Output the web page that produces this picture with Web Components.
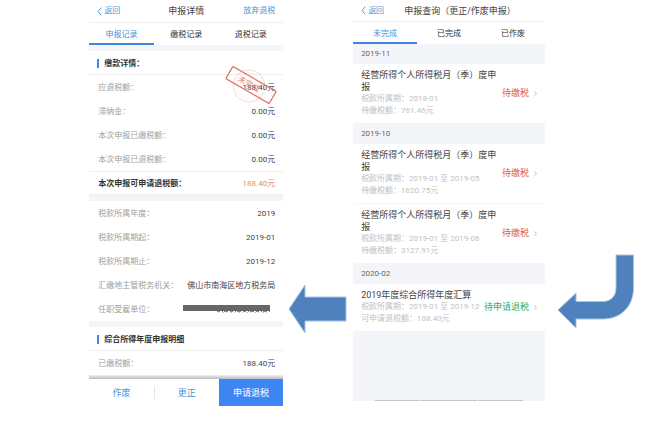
<!DOCTYPE html>
<html lang="zh-CN">
<head>
<meta charset="utf-8">
<title>申报详情</title>
<style>
    body{
        margin: 0;
        background: #fff;
        color: #444;
        font: 8px/12px Roboto, "Noto Sans CJK SC", sans-serif;
    }
</style>
</head>
<body>
<flow-board>
    <phone-screen>
        <nav-bar>申报详情<button-link slot="action">放弃退税</button-link></nav-bar>
        <tab-bar tabs="申报记录,缴税记录,退税记录"></tab-bar>
        <screen-gap></screen-gap>
        <section-title>缴款详情：</section-title>
        <info-row label="应退税额：">188.40元<status-stamp slot="stamp">未完成</status-stamp></info-row>
        <info-row label="滞纳金：">0.00元</info-row>
        <info-row label="本次申报已缴税额：">0.00元</info-row>
        <info-row label="本次申报已退税额：">0.00元</info-row>
        <info-row total label="本次申报可申请退税额：">188.40元</info-row>
        <screen-gap></screen-gap>
        <info-row label="税款所属年度：">2019</info-row>
        <info-row label="税款所属期起：">2019-01</info-row>
        <info-row label="税款所属期止：">2019-12</info-row>
        <info-row label="汇缴地主管税务机关：">佛山市南海区地方税务局</info-row>
        <info-row label="任职受雇单位："><redacted-bar></redacted-bar></info-row>
        <screen-gap></screen-gap>
        <section-title>综合所得年度申报明细</section-title>
        <info-row label="已缴税额：">188.40元</info-row>
        <action-bar></action-bar>
    </phone-screen>
    <flow-arrow kind="straight"></flow-arrow>
    <phone-screen>
        <nav-bar start>申报查询（更正/作废申报）</nav-bar>
        <tab-bar tabs="未完成,已完成,已作废"></tab-bar>
        <month-head>2019-11</month-head>
        <record-item period="2018-01" amount-label="待缴税额" amount="761.46元" status="待缴税">经营所得个人所得税月（季）度申报</record-item>
        <month-head>2019-10</month-head>
        <record-item period="2019-01 至 2019-05" amount-label="待缴税额" amount="1620.75元" status="待缴税">经营所得个人所得税月（季）度申报</record-item>
        <record-item period="2019-01 至 2019-06" amount-label="待缴税额" amount="3127.91元" status="待缴税">经营所得个人所得税月（季）度申报</record-item>
        <month-head>2020-02</month-head>
        <record-item refund period="2019-01 至 2019-12" amount-label="可申请退税额" amount="188.40元" status="待申请退税">2019年度综合所得年度汇算</record-item>
        <list-end></list-end>
    </phone-screen>
    <flow-arrow kind="bent"></flow-arrow>
</flow-board>

<script>
function define(name, render){
    customElements.define(name, class extends HTMLElement {
        constructor(){
            super();
            this.attachShadow({mode: 'open'});
        }
        connectedCallback(){
            this.shadowRoot.innerHTML = render(this);
        }
    });
}

const reset = `
    *{ box-sizing: border-box; }
    button{
        font: inherit;
        color: inherit;
        background: none;
        border: 0;
        padding: 0;
        margin: 0;
        white-space: nowrap;
    }
`;

define('flow-board', () => `
    <style>
        :host{
            display: grid;
            grid-template-columns: 194fr 70fr 192fr 116fr;
            align-items: start;
            padding-left: 13.5%;
        }
    </style>
    <slot></slot>
`);

define('phone-screen', () => `
    <style>
        :host{
            display: flex;
            flex-direction: column;
            min-width: 0;
        }
    </style>
    <slot></slot>
`);

define('nav-bar', () => `
    <style>
        ${reset}
        :host{
            display: grid;
            grid-template-columns: 1fr auto 1fr;
            align-items: center;
            height: 23px;
            padding: 0 8px;
            border-bottom: 1px solid #eee;
            box-sizing: border-box;
        }
        :host([start]){
            grid-template-columns: auto 1fr;
            column-gap: 20px;
            height: 22px;
        }
        .back{
            display: flex;
            align-items: center;
            gap: 2px;
            color: #5596d2;
        }
        h1{
            margin: 0;
            font-size: 9px;
            font-weight: 400;
            white-space: nowrap;
        }
        ::slotted([slot=action]){ justify-self: end; }
    </style>
    <button class="back">
        <svg width="5" height="9" viewBox="0 0 5 9" fill="none" stroke="currentColor"><path d="M4.3.6 1 4.5l3.3 3.9"/></svg>
        返回
    </button>
    <h1><slot></slot></h1>
    <slot name="action"></slot>
`);

define('button-link', () => `
    <style>
        ${reset}
        :host{ display: flex; color: #5596d2; }
    </style>
    <button><slot></slot></button>
`);

define('tab-bar', el => `
    <style>
        ${reset}
        :host{
            display: flex;
            height: 22px;
            color: #333;
        }
        button{
            flex: 1;
            padding-top: 3px;
            border-bottom: 2px solid transparent;
        }
        .active{
            color: #4a90d9;
            border-color: #3f86e0;
        }
    </style>
    ${el.getAttribute('tabs').split(',').map((t, i) => `<button class="${i ? '' : 'active'}">${t}</button>`).join('')}
`);

define('screen-gap', () => `<style>:host{ display: block; height: 6px; background: #f4f5f9; }</style>`);

define('section-title', () => `
    <style>
        :host{
            display: flex;
            align-items: center;
            gap: 5px;
            height: 24px;
            padding: 2px 8px 0;
            border-bottom: 1px solid #eee;
            box-sizing: border-box;
            color: #333;
        }
        i{
            width: 2px;
            height: 9px;
            background: #3f86e8;
        }
        h2{
            margin: 0;
            font-size: 8px;
            font-weight: 700;
        }
    </style>
    <i></i><h2><slot></slot></h2>
`);

define('info-row', el => `
    <style>
        :host{
            display: flex;
            justify-content: space-between;
            align-items: center;
            height: 24px;
            padding: 2px 8px 0 9px;
            box-sizing: border-box;
            position: relative;
            white-space: nowrap;
        }
        .label{ color: #a0a0a0; }
        :host([total]){
            border: solid #eee;
            border-width: 1px 0;
        }
        :host([total]) .label{
            color: #333;
            font-weight: 700;
        }
        :host([total]) .value{ color: #e0954a; }
        ::slotted([slot=stamp]){
            position: absolute;
            right: 4px;
            top: -12px;
        }
    </style>
    <span class="label">${el.getAttribute('label')}</span>
    <span class="value"><slot></slot></span>
    <slot name="stamp"></slot>
`);

define('status-stamp', el => `
    <style>:host{ display: block; width: 56px; height: 44px; }</style>
    <svg width="56" height="44" viewBox="0 0 56 44" fill="none" stroke="#e27b70">
        <circle cx="26" cy="23" r="16" stroke-width=".6" opacity=".5"/>
        <circle cx="26" cy="23" r="13" stroke-width=".5" stroke-dasharray="2 1" opacity=".3"/>
        <g transform="rotate(30 28 22)">
            <rect x="3" y="15" width="50" height="14" rx="1" stroke-width="1.3"/>
            <text x="26" y="25" font-size="8" text-anchor="middle" fill="#e27b70" stroke="none">${el.textContent}</text>
        </g>
    </svg>
`);

define('redacted-bar', () => `
    <style>
        :host{ display: flex; padding-right: 4px; }
    </style>
    <svg width="88" height="12" viewBox="0 0 88 12">
        <path fill="#666" d="M0 1h87v6H0z"/>
        <path stroke="#888" stroke-dasharray="3 2 1 1 4 2" d="M34 7.5h53"/>
        <path stroke="#ccc" stroke-dasharray="1 3 2 2" d="M35 8.500h51"/>
    </svg>
`);

define('action-bar', () => `
    <style>
        ${reset}
        :host{
            display: block;
            font-size: 9px;
            color: #4a90d9;
        }
        .shade{
            height: 4px;
            background: linear-gradient(#f0f0f2, #b9bcc2);
        }
        .buttons{
            display: flex;
            align-items: center;
        }
        button{
            flex: 1;
            height: 27px;
        }
        i{
            width: 1px;
            height: 13px;
            background: #e4e6ea;
        }
        .primary{
            background: #3f86f5;
            color: #fff;
        }
    </style>
    <div class="shade"></div>
    <div class="buttons">
        <button>作废</button>
        <i></i>
        <button>更正</button>
        <button class="primary">申请退税</button>
    </div>
`);

define('month-head', () => `
    <style>
        :host{
            display: block;
            padding: 4px 8px;
            background: #f4f5f9;
            color: #666;
        }
    </style>
    <slot></slot>
`);

define('record-item', el => `
    <style>
        :host{
            display: flex;
            align-items: center;
            gap: 5px;
            padding: 5px 8px 6px;
            border-bottom: 1px solid #f6f6f8;
        }
        .text{
            flex: 1;
            min-width: 0;
        }
        h3, p{ margin: 0; }
        h3{
            font-size: 9px;
            font-weight: 400;
        }
        p{
            color: #c2c2c2;
            white-space: nowrap;
        }
        .status{
            font-size: 9px;
            color: #d9604f;
            white-space: nowrap;
        }
        :host([refund]) .status{ color: #2fae6e; }
    </style>
    <div class="text">
        <h3><slot></slot></h3>
        <p>税款所属期：${el.getAttribute('period')}</p>
        <p>${el.getAttribute('amount-label')}：${el.getAttribute('amount')}</p>
    </div>
    <span class="status">${el.getAttribute('status')}</span>
    <svg width="3" height="5" viewBox="0 0 3 5" fill="none" stroke="#bbb"><path d="M.5.5l2 2-2 2"/></svg>
`);

define('list-end', () => `
    <style>
        :host{
            display: flex;
            align-items: flex-end;
            gap: 1px;
            height: 69px;
            padding: 0 22px;
            background: #f4f5f9;
            box-sizing: border-box;
        }
        i{
            flex: 45;
            height: 1px;
            background: #c4c2ca;
        }
        i:nth-of-type(2){ flex-grow: 56; }
    </style>
    <i></i><i></i><i></i>
`);

const arrows = {
    straight: '<svg width="60" height="50" viewBox="0 0 60 50"><path d="M1 25 17 1v12h41v24H17v12z"/></svg>',
    bent: '<svg width="78" height="76" viewBox="0 0 78 76"><path d="M1 56 19 39v8.500h27C54 47.500 59 42 59 34V1h17.500v33C76.500 52 64 65 46 65H19v9z"/></svg>'
};

define('flow-arrow', el => `
    <style>
        :host{
            display: flex;
            justify-content: center;
            padding-top: 284px;
        }
        :host([kind=bent]){
            justify-content: flex-start;
            padding: 254px 0 0 12px;
        }
        svg{
            flex: none;
            fill: #4f81bd;
            stroke: #a9c4e4;
        }
    </style>
    ${arrows[el.getAttribute('kind')]}
`);
</script>
</body>
</html>
